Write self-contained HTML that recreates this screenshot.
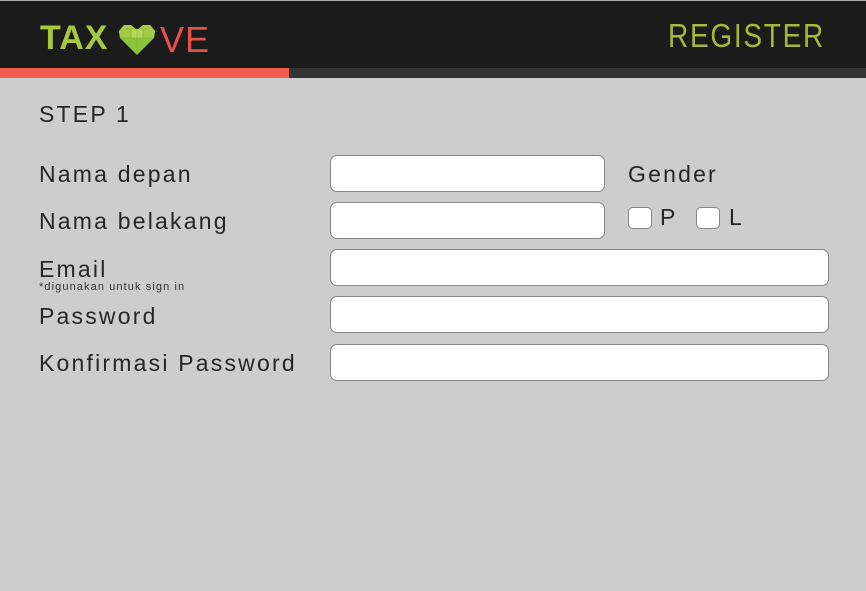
<!DOCTYPE html>
<html><head><style>
body{margin:0;width:866px;height:591px;background:#cdcdcd;font-family:"Liberation Sans",sans-serif;position:relative;overflow:hidden}
.hdr{position:absolute;left:0;top:0;width:866px;height:68px;background:#1b1b1b;border-top:1px solid #aaa;box-sizing:border-box}
.bar{position:absolute;top:68px;height:10px}
.t{position:absolute;color:#262626;font-size:23px;letter-spacing:2.2px;font-weight:300}
.in{position:absolute;background:#fff;border:1px solid #888;border-radius:7px;box-sizing:border-box}
.cb{position:absolute;width:24px;height:22px;background:#fff;border:1px solid #888;border-radius:5px;box-sizing:border-box;top:207px}
</style></head><body>
<div class="hdr"></div>
<div class="bar" style="left:0;width:289px;background:#f05a50"></div>
<div class="bar" style="left:289px;width:577px;background:#333"></div>
<div style="position:absolute;left:40px;top:19px;font-size:34px;font-weight:bold;color:#a5c83c;letter-spacing:1px">TAX</div>
<svg style="position:absolute;left:118px;top:24px" width="38" height="32" viewBox="0 0 38 32">
<path d="M19 31 L2 14 L1 7 L6 1 L13 1 L19 6 L25 1 L32 1 L37 7 L36 14 Z" fill="#8cc43c"/>
<path d="M6 1 L13 1 L19 6 L25 1 L32 1 L37 7 L36 14 L19 14 L2 14 L1 7Z" fill="#a4cc48"/>
<path d="M13 5 L25 5 L25 14 L13 14Z" fill="#b5d85a"/>
<path d="M13 5 L13 14 M19 6 L19 31 M25 5 L25 14 M2 14 L36 14 M8 5 L30 5" stroke="#7fa838" stroke-width=".6" fill="none"/>
</svg>
<div style="position:absolute;left:160px;top:19px;font-size:36px;color:#e8504a;font-weight:300;letter-spacing:1px">VE</div>
<div style="position:absolute;left:668px;top:17px;font-size:33px;color:#a5b83a;letter-spacing:2px;transform:scaleX(0.85);transform-origin:left top;white-space:nowrap">REGISTER</div>
<div class="t" style="left:39px;top:101px">STEP 1</div>
<div class="t" style="left:39px;top:161px">Nama depan</div>
<div class="t" style="left:39px;top:208px">Nama belakang</div>
<div class="t" style="left:39px;top:256px">Email</div>
<div style="position:absolute;left:39px;top:281px;font-size:11px;color:#333;letter-spacing:1.1px">*digunakan untuk sign in</div>
<div class="t" style="left:39px;top:303px">Password</div>
<div class="t" style="left:39px;top:350px">Konfirmasi Password</div>
<div class="t" style="left:628px;top:161px">Gender</div>
<div class="in" style="left:330px;top:155px;width:275px;height:37px"></div>
<div class="in" style="left:330px;top:202px;width:275px;height:37px"></div>
<div class="in" style="left:330px;top:249px;width:499px;height:37px"></div>
<div class="in" style="left:330px;top:296px;width:499px;height:37px"></div>
<div class="in" style="left:330px;top:344px;width:499px;height:37px"></div>
<div class="cb" style="left:628px"></div>
<div class="t" style="left:660px;top:204px">P</div>
<div class="cb" style="left:696px"></div>
<div class="t" style="left:729px;top:204px">L</div>
</body></html>
